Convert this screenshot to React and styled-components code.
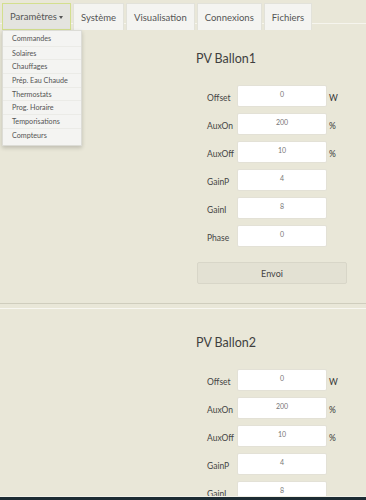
import React from 'react'
import styled, { createGlobalStyle } from 'styled-components'

const TABS = ['Paramètres', 'Système', 'Visualisation', 'Connexions', 'Fichiers']

const MENU = [
  'Commandes',
  'Solaires',
  'Chauffages',
  'Prép. Eau Chaude',
  'Thermostats',
  'Prog. Horaire',
  'Temporisations',
  'Compteurs',
]

const FIELDS = [
  { label: 'Offset', value: '0', unit: 'W' },
  { label: 'AuxOn', value: '200', unit: '%' },
  { label: 'AuxOff', value: '10', unit: '%' },
  { label: 'GainP', value: '4' },
  { label: 'GainI', value: '8' },
  { label: 'Phase', value: '0' },
]

const GlobalStyle = createGlobalStyle`
  body {
    margin: 0;
    background: #e9e7d8;
    font-family: 'Lato', 'Open Sans', sans-serif;
    color: #444;
    overflow: hidden;
  }
`

const Page = styled.div`
  width: 366px;
  height: 500px;
  overflow: hidden;
  position: relative;
`

const Nav = styled.nav`
  position: relative;
  display: flex;
  gap: 2px;
  height: 20px;
  margin-top: 3px;
  padding-left: 2px;
  border-bottom: 1px solid #f6f5ee;
`

const Tab = styled.div`
  position: relative;
  z-index: 1;
  box-sizing: border-box;
  height: 27px;
  display: flex;
  align-items: center;
  padding: 0 ${({ $active }) => ($active ? '7px' : '7px')};
  font-size: 9.5px;
  color: #555;
  background: ${({ $active }) => ($active ? '#e4e4df' : '#f4f4f1')};
  border: 1px solid ${({ $active }) => ($active ? '#d3df8e' : '#e2e2da')};
  border-bottom: ${({ $active }) => ($active ? '1px solid #d3df8e' : 'none')};
`

const Caret = styled.span`
  display: inline-block;
  margin-left: 2px;
  border-left: 2.5px solid transparent;
  border-right: 2.5px solid transparent;
  border-top: 3px solid #555;
  transform: translateY(1px);
`

const Menu = styled.ul`
  position: absolute;
  z-index: 5;
  top: 27px;
  left: 2px;
  width: 78px;
  margin: 0;
  padding: 1px 0 3px;
  list-style: none;
  background: #f4f4f2;
  border: 1px solid #dcdcd6;
  box-shadow: 0 2px 4px rgba(0, 0, 0, 0.18);
`

const MenuItem = styled.li`
  height: 13.7px;
  line-height: 13.7px;
  padding-left: 9px;
  font-size: 7.2px;
  color: #555;
  border-top: ${({ $first }) => ($first ? 'none' : '1px solid #ebebe7')};
  box-sizing: border-box;
`

const Section = styled.section`
  padding: ${({ $first }) => ($first ? '27px' : '26px')} 0 19px 196px;
  border-top: ${({ $first }) => ($first ? 'none' : '1px solid #f8f7f1')};
  border-bottom: ${({ $first }) => ($first ? '1px solid #cfcdbd' : 'none')};
  margin-bottom: ${({ $first }) => ($first ? '4px' : '0')};
`

const Title = styled.h2`
  margin: 0 0 18px;
  font-size: 12.5px;
  font-weight: 400;
  color: #3f3f3f;
  line-height: 16px;
`

const Form = styled.div`
  display: flex;
  flex-direction: column;
  gap: 6px;
  padding-left: 11px;
`

const Row = styled.div`
  display: flex;
  align-items: center;
  height: 22px;
`

const Label = styled.span`
  width: 30px;
  font-size: 8.5px;
  color: #444;
  padding-top: 4px;
`

const Input = styled.div`
  box-sizing: border-box;
  width: 90px;
  height: 22px;
  background: #fff;
  border: 1px solid #e3e1d6;
  border-radius: 2px;
  font-size: 7px;
  color: #777;
  text-align: center;
  line-height: 16px;
`

const Unit = styled.span`
  margin-left: 2px;
  font-size: 8.5px;
  color: #333;
  padding-top: 4px;
`

const Button = styled.div`
  box-sizing: border-box;
  width: 150px;
  height: 22px;
  margin: 15px 0 0 1px;
  background: #e3e1d3;
  border: 1px solid #d8d6c8;
  border-radius: 2px;
  display: flex;
  align-items: center;
  justify-content: center;
  font-size: 9px;
  color: #444;
`

const Footer = styled.div`
  position: absolute;
  left: 0;
  right: 0;
  bottom: 0;
  height: 3px;
  background: #1d2c33;
  border-top: 1px solid #f2f1e8;
`

const Ballon = ({ name, first }) => (
  <Section $first={first}>
    <Title>{name}</Title>
    <Form>
      {FIELDS.map(f => (
        <Row key={f.label}>
          <Label>{f.label}</Label>
          <Input>{f.value}</Input>
          {f.unit && <Unit>{f.unit}</Unit>}
        </Row>
      ))}
    </Form>
    <Button>Envoi</Button>
  </Section>
)

export default function App() {
  return (
    <Page>
      <GlobalStyle />
      <Nav>
        {TABS.map((t, i) => (
          <Tab key={t} $active={i === 0}>
            {t}
            {i === 0 && <Caret />}
          </Tab>
        ))}
        <Menu>
          {MENU.map((m, i) => (
            <MenuItem key={m} $first={i === 0}>
              {m}
            </MenuItem>
          ))}
        </Menu>
      </Nav>
      <Ballon name="PV Ballon1" first />
      <Ballon name="PV Ballon2" />
      <Footer />
    </Page>
  )
}
